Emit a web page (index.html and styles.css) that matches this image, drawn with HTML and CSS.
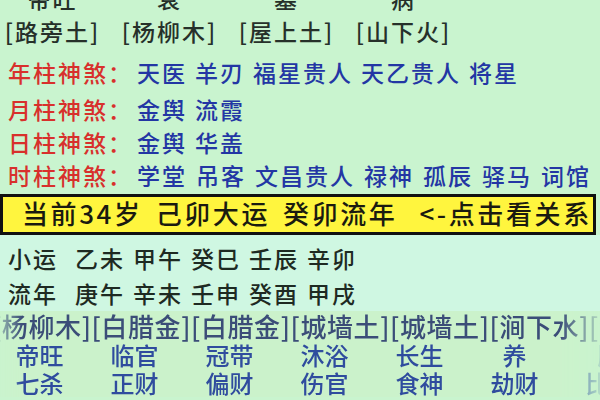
FILE: index.html
```html
<!DOCTYPE html>
<html lang="zh-CN">
<head>
<meta charset="utf-8">
<title>八字排盘</title>
<link rel="stylesheet" href="styles.css">
</head>
<body>
<div class="page">
  <section class="top">
    <div class="pillars dishi"><span>帝旺</span><span>衰</span><span>墓</span><span>病</span></div>
    <div class="pillars nayin"><span>[路旁土]</span><span>[杨柳木]</span><span>[屋上土]</span><span>[山下火]</span></div>
    <div class="shensha first"><span class="lbl">年柱神煞：</span><span class="vals"><span>天医</span><span>羊刃</span><span>福星贵人</span><span>天乙贵人</span><span>将星</span></span></div>
    <div class="shensha"><span class="lbl">月柱神煞：</span><span class="vals"><span>金舆</span><span>流霞</span></span></div>
    <div class="shensha"><span class="lbl">日柱神煞：</span><span class="vals"><span>金舆</span><span>华盖</span></span></div>
    <div class="shensha"><span class="lbl">时柱神煞：</span><span class="vals wide"><span>学堂</span><span>吊客</span><span>文昌贵人</span><span>禄神</span><span>孤辰</span><span>驿马</span><span>词馆</span></span></div>
  </section>
  <div class="dayun-bar"><span>当前34岁</span><span>己卯大运</span><span>癸卯流年</span><span class="hint">&lt;-点击看关系</span></div>
  <section class="mid">
    <div class="yun-row"><span class="yun-lbl">小运</span><span>乙未</span><span>甲午</span><span>癸巳</span><span>壬辰</span><span>辛卯</span></div>
    <div class="yun-row"><span class="yun-lbl">流年</span><span>庚午</span><span>辛未</span><span>壬申</span><span>癸酉</span><span>甲戌</span></div>
  </section>
  <section class="bottom">
    <div class="nayin-strip">[杨柳木][白腊金][白腊金][城墙土][城墙土][涧下水][涧下水]</div>
    <div class="cols"><span>帝旺</span><span>临官</span><span>冠带</span><span>沐浴</span><span>长生</span><span>养</span><span>胎</span></div>
    <div class="cols"><span>七杀</span><span>正财</span><span>偏财</span><span>伤官</span><span>食神</span><span>劫财</span><span>比肩</span></div>
  </section>
</div>
</body>
</html>
```
FILE: styles.css
```css
html, body {
  margin: 0;
  padding: 0;
}
body {
  width: 600px;
  height: 400px;
  overflow: hidden;
  background: #c9f4cf;
  font-family: "Noto Sans CJK SC", "Noto Sans", sans-serif;
  font-weight: 500;
}
.page {
  width: 600px;
  height: 400px;
  overflow: hidden;
}
.top {
  margin-top: -18px;
  padding-bottom: 1px;
  background: #c9f4cf;
}
.pillars {
  display: grid;
  grid-template-columns: repeat(4, 117px);
  margin-left: -6px;
  font-size: 23px;
  letter-spacing: 2px;
  line-height: 33px;
  color: #26302a;
  text-align: center;
}
.shensha {
  display: flex;
  padding-left: 8px;
  font-size: 23px;
  letter-spacing: 2px;
  line-height: 33px;
  white-space: nowrap;
}
.shensha.first {
  margin-top: 8px;
  margin-bottom: 4px;
}
.lbl {
  width: 129px;
  flex: none;
  color: #d8302c;
}
.vals {
  display: flex;
  gap: 8px;
  color: #2336a4;
}
.vals.wide {
  gap: 9px;
}
.dayun-bar {
  display: flex;
  gap: 13px;
  height: 35px;
  box-sizing: content-box;
  margin-top: 1px;
  margin-right: 4px;
  padding-left: 19px;
  border: 3px solid #111;
  background: #fff53e;
  color: #1a1a10;
  font-size: 26px;
  letter-spacing: 2.6px;
  line-height: 31px;
  white-space: nowrap;
}
.dayun-bar .hint {
  margin-left: 9px;
}
.mid {
  padding-top: 6px;
  background: #cff7e2;
}
.yun-row {
  display: flex;
  gap: 8px;
  padding-left: 8px;
  font-size: 23px;
  letter-spacing: 2px;
  line-height: 35px;
  color: #1e2a22;
  white-space: nowrap;
}
.yun-lbl {
  margin-right: 9px;
}
.bottom {
  background: #cbf2cb;
  -webkit-mask-image: linear-gradient(90deg, rgba(0,0,0,0.35) 0, #000 22px, #000 560px, rgba(0,0,0,0.15) 600px);
  mask-image: linear-gradient(90deg, rgba(0,0,0,0.35) 0, #000 22px, #000 560px, rgba(0,0,0,0.15) 600px);
}
.nayin-strip {
  margin-left: -8px;
  font-size: 26px;
  letter-spacing: 0.6px;
  line-height: 30px;
  color: #3b4d78;
  white-space: nowrap;
}
.cols {
  display: grid;
  grid-template-columns: repeat(7, 95px);
  margin-left: -8px;
  font-size: 24px;
  line-height: 28px;
  color: #2f4c9e;
  text-align: center;
  white-space: nowrap;
}
```
